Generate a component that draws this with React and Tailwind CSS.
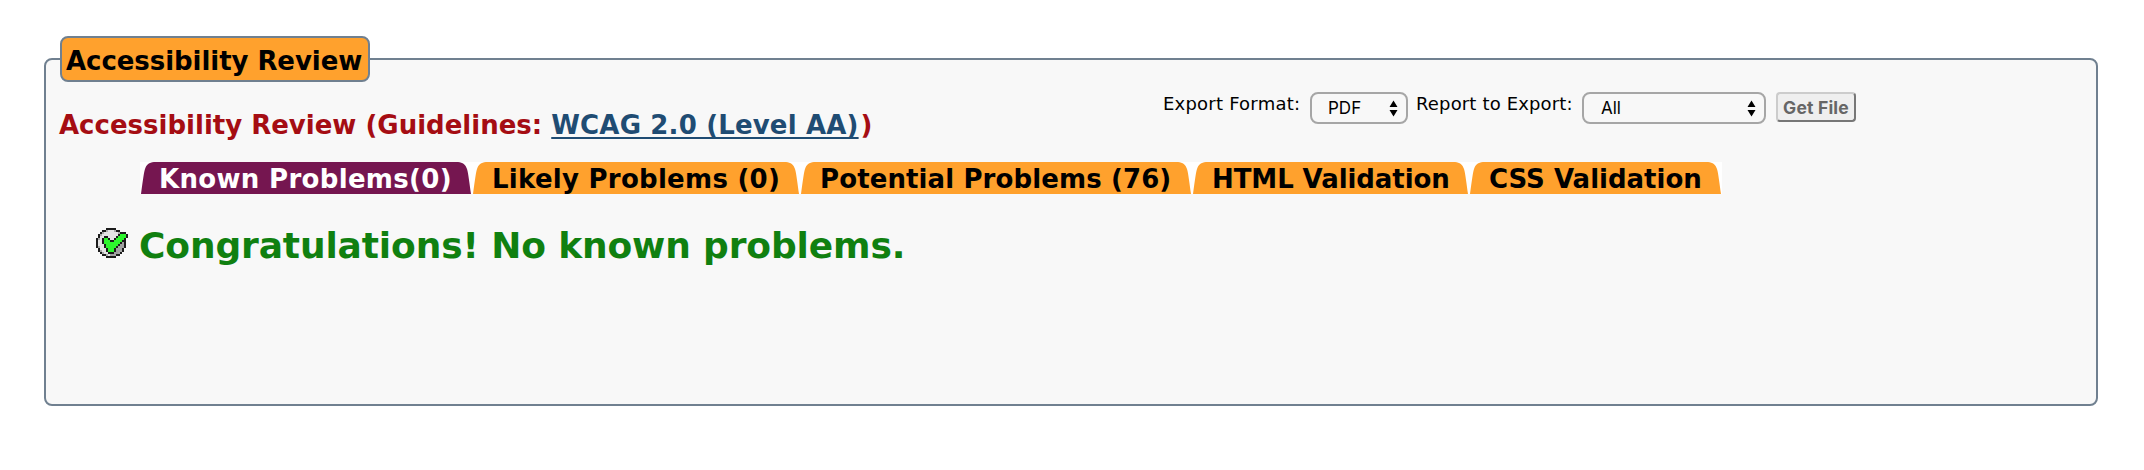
const tabs = [
  { label: 'Known Problems(0)', cls: 'w-[332px] tracking-[0.32px]', active: true },
  { label: 'Likely Problems (0)', cls: 'w-[328px] tracking-[0.27px]' },
  { label: 'Potential Problems (76)', cls: 'w-[392px] tracking-[0.11px]' },
  { label: 'HTML Validation', cls: 'w-[277px] tracking-[-0.08px]' },
  { label: 'CSS Validation', cls: 'w-[253px] tracking-[0px]' },
];

function TabEdge({ active, flip }) {
  return (
    <svg width="16" height="32" viewBox="0 0 16 32" className={flip ? 'shrink-0 -scale-x-100' : 'shrink-0'}>
      <path d="M1 32C2.500 22 3.500 12 5 7C6.500 2.500 9 0.500 14 0H16V32Z" fill={active ? '#751650' : '#ffa12d'} />
    </svg>
  );
}

function Arrows() {
  return (
    <svg width="9" height="17" viewBox="0 0 9 17" className="shrink-0">
      <path d="M4.500 0.500L8.500 7H0.500ZM4.500 16.500L8.500 10H0.500Z" fill="#000" />
    </svg>
  );
}

// 16x15 pixel-art check mark, drawn at twice its size
const checkRows = [
  '.....kkkkk......',
  '...kkgwwwgkk....',
  '..kgwwwwwwwgkkk.',
  '.kgwwwwwwwwkGGGk',
  '.kwwkkwwwwkGGGGk',
  'kgwkGGkwwkGGGGk.',
  'kwwkGGGkkGGGGkk.',
  'kwwkGGGGGGGGkdk.',
  'kwwwkGGGGGGkddk.',
  'kgwwkGGGGGkdddk.',
  '.kwwwkGGGkdddk..',
  '.kgwwkGGGkddgk..',
  '..kgwwkkkddgk...',
  '...kkgwddgkk....',
  '.....kkkkk......',
];
const checkColors = { k: '#1c1c1c', g: '#a8a8a8', w: '#e4e4e4', d: '#a0a0a0', G: '#2df52d' };

function CheckIcon() {
  return (
    <svg width="32" height="30" viewBox="0 0 16 15" className="shrink-0" shapeRendering="crispEdges">
      {checkRows.map((row, y) =>
        [...row].map((c, x) =>
          checkColors[c] ? <rect key={`${x}-${y}`} x={x} y={y} width="1" height="1" fill={checkColors[c]} /> : null
        )
      )}
    </svg>
  );
}

export default function App() {
  return (
    <div className="h-[470px] w-[2144px] bg-white pl-[44px] pt-[58px] font-['DejaVu_Sans',sans-serif] text-black">
      <div className="h-[348px] w-[2054px] rounded-lg border-2 border-[#708090] bg-[#f8f8f8]">
        <div className="-mt-6 ml-[14px] h-[46px] w-[310px] whitespace-nowrap rounded-lg border-2 border-[#708090] bg-[#ffa12d] pl-1 text-[26px] font-bold leading-[46px] tracking-[-0.06px]">
          Accessibility Review
        </div>
        <div className="mt-[10px] flex h-[70px] items-start">
          <h2 className="ml-[13px] mt-[17px] w-[1104px] whitespace-nowrap text-[26px] font-bold leading-8 text-[#a50d13]">
            Accessibility Review (Guidelines:{' '}
            <a className="tracking-[0.17px] text-[#1f4c73] underline decoration-2 underline-offset-[3px]">WCAG 2.0 (Level AA)</a>
            <span className="ml-0.5">)</span>
          </h2>
          <div className="flex items-start whitespace-nowrap text-[18px] leading-6">
            <span className="w-[147px] tracking-[0.22px]">Export Format:</span>
            <div className="flex h-8 w-[98px] items-center justify-between rounded-lg border-2 border-[#a6a6a6] bg-[#f8f8f8] pl-4 pr-2 font-['Inter',sans-serif]">
              <span className="text-[17px]">PDF</span>
              <Arrows />
            </div>
            <span className="ml-2 w-[166px] tracking-[0.15px]">Report to Export:</span>
            <div className="flex h-8 w-[184px] items-center justify-between rounded-lg border-2 border-[#a6a6a6] bg-[#f8f8f8] pl-[17px] pr-2 font-['Inter',sans-serif]">
              <span className="text-[17px]">All</span>
              <Arrows />
            </div>
            <div className="ml-[10px] h-[30px] w-[80px] rounded-[4px] border-2 border-b-[#777] border-l-[#ccc] border-r-[#777] border-t-[#ccc] bg-[#efefef] text-center font-['Inter',sans-serif] text-[17.500px] font-bold leading-[28px] tracking-[0.2px] text-[#666]">
              Get File
            </div>
          </div>
        </div>
        <div className="ml-[94px] flex w-[1582px] bg-white">
          {tabs.map((t) => (
            <div key={t.label} className={`flex h-8 shrink-0 whitespace-nowrap text-[26px] font-bold leading-[34px] ${t.cls}`}>
              <TabEdge active={t.active} />
              <div className={t.active ? 'w-0 grow bg-[#751650] pl-[3px] text-white' : 'w-0 grow bg-[#ffa12d] pl-1'}>{t.label}</div>
              <TabEdge active={t.active} flip />
            </div>
          ))}
        </div>
        <div className="ml-[50px] mt-[28px] flex items-start">
          <div className="mt-[6px]">
            <CheckIcon />
          </div>
          <div className="ml-[11px] whitespace-nowrap text-[36px] font-bold leading-[47px] tracking-[-0.13px] text-[#108010]">
            Congratulations! No known problems.
          </div>
        </div>
      </div>
    </div>
  );
}
